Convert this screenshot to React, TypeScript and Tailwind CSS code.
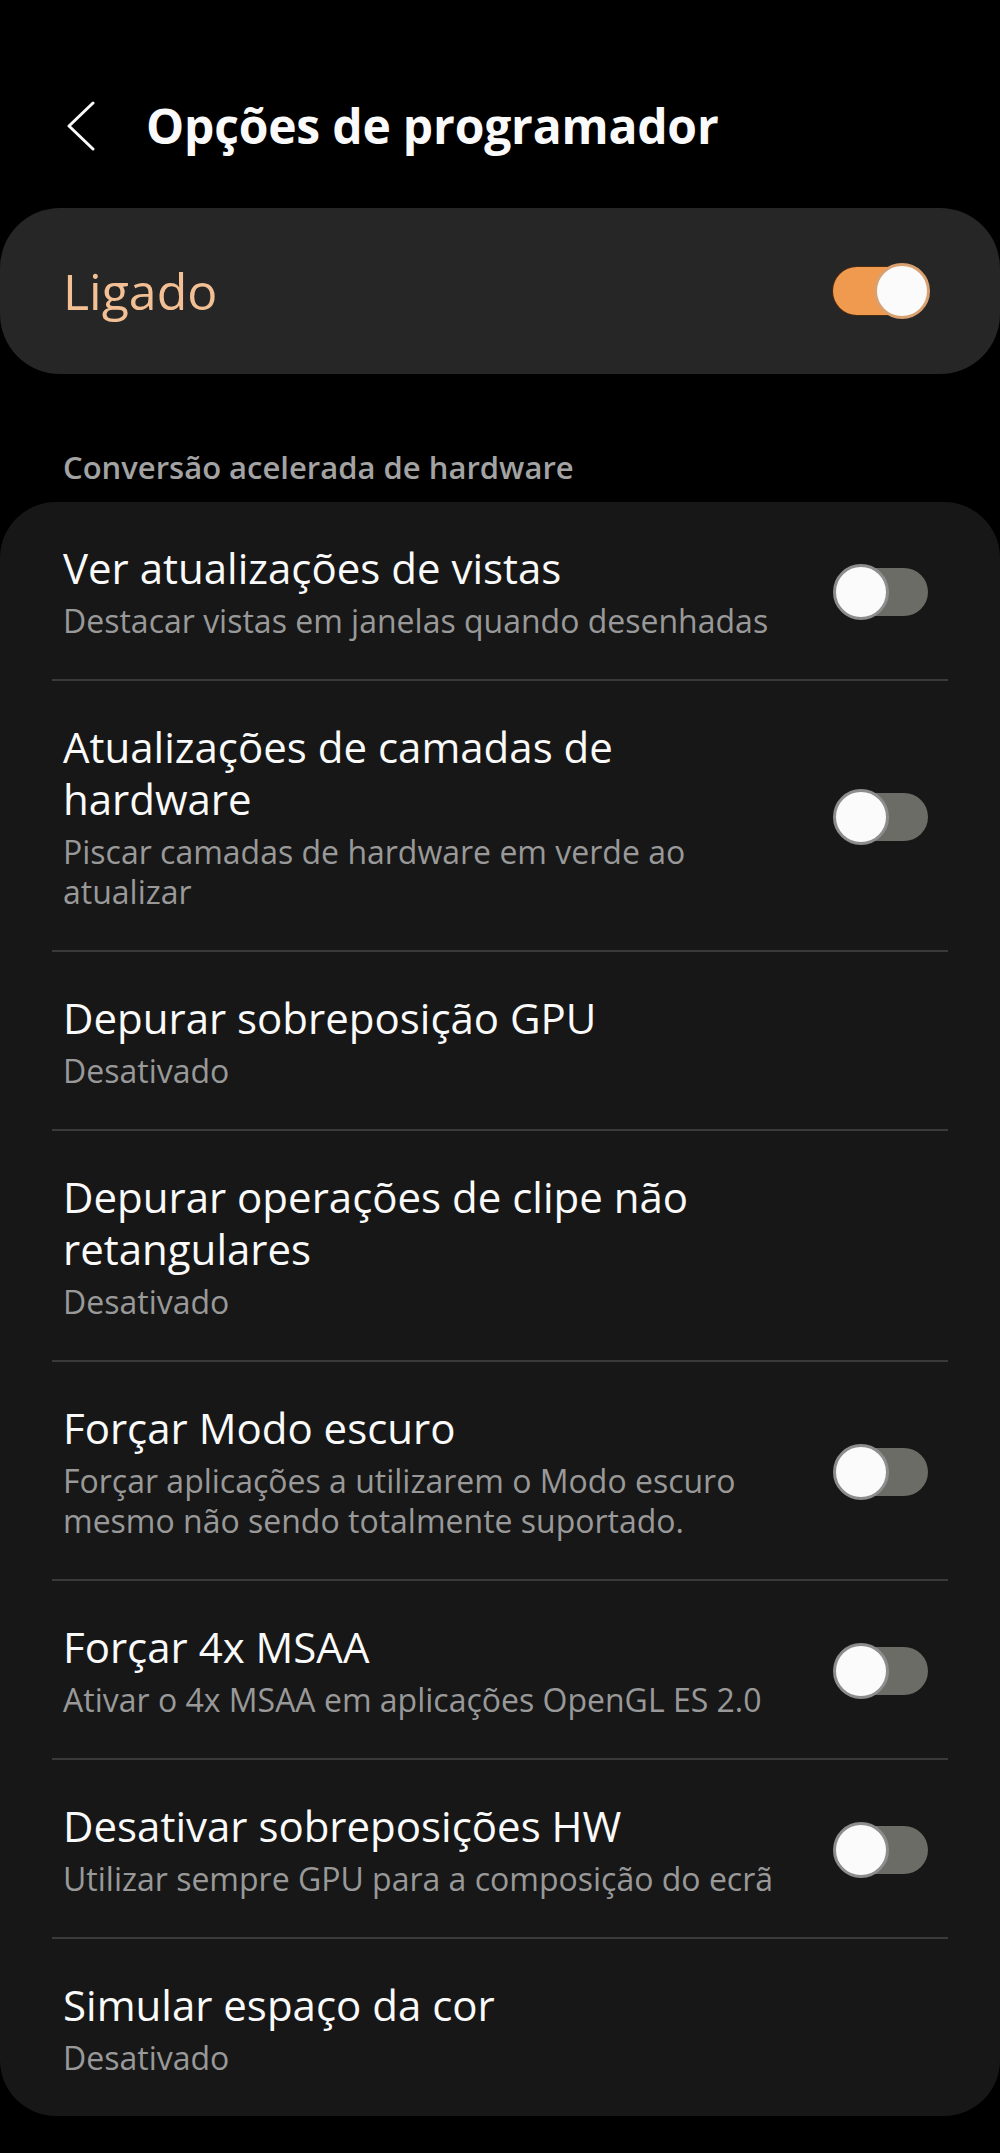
import { useState } from 'react';

type Item = {
  title: string;
  summary: string;
  toggle?: boolean;
};

const items: Item[] = [
  { title: 'Ver atualizações de vistas', summary: 'Destacar vistas em janelas quando desenhadas', toggle: true },
  { title: 'Atualizações de camadas de hardware', summary: 'Piscar camadas de hardware em verde ao atualizar', toggle: true },
  { title: 'Depurar sobreposição GPU', summary: 'Desativado' },
  { title: 'Depurar operações de clipe não retangulares', summary: 'Desativado' },
  { title: 'Forçar Modo escuro', summary: 'Forçar aplicações a utilizarem o Modo escuro mesmo não sendo totalmente suportado.', toggle: true },
  { title: 'Forçar 4x MSAA', summary: 'Ativar o 4x MSAA em aplicações OpenGL ES 2.0', toggle: true },
  { title: 'Desativar sobreposições HW', summary: 'Utilizar sempre GPU para a composição do ecrã', toggle: true },
  { title: 'Simular espaço da cor', summary: 'Desativado' },
];

function Switch({ on, onClick }: { on: boolean; onClick: () => void }) {
  return (
    <button type="button" onClick={onClick} className="relative w-[97px] h-[56px] shrink-0">
      <span
        className={
          on
            ? 'absolute left-0 right-[6px] top-[4px] bottom-[4px] rounded-full bg-[#ef9a4e] ring-1 ring-[#4a2c12]'
            : 'absolute left-[6px] right-[2px] top-[4px] bottom-[4px] rounded-full bg-[#6b6c66]'
        }
      />
      <span
        className={
          on
            ? 'absolute right-0 top-0 w-[56px] h-[56px] rounded-full bg-[#fbfbfb] border-[3px] border-[#d9a070]'
            : 'absolute left-0 top-0 w-[56px] h-[56px] rounded-full bg-[#fbfbfb] border-[3px] border-[#8d8d8d]'
        }
      />
    </button>
  );
}

export default function App() {
  const [enabled, setEnabled] = useState(true);
  const [flags, setFlags] = useState<boolean[]>(items.map(() => false));

  const flip = (i: number) => {
    setFlags((prev) => prev.map((v, j) => (j === i ? !v : v)));
  };

  return (
    <div
      className="min-h-[2153px] bg-black text-[#fafafa] pt-[76px]"
      style={{ fontFamily: '"Open Sans", "Noto Sans", sans-serif' }}
    >
      <div className="flex items-center h-[100px] pl-[66px]">
        <svg width="30" height="50" viewBox="0 0 30 50" fill="none" stroke="#fafafa" strokeWidth="3" strokeLinecap="round" strokeLinejoin="round">
          <path d="M27 2 L3 25 L27 48" />
        </svg>
        <h1 className="ml-[50px] text-[48px] font-bold leading-none tracking-[-0.2px]">Opções de programador</h1>
      </div>

      <div className="mt-[32px] h-[166px] rounded-[60px] bg-[#262626] flex items-center pl-[63px] pr-[70px]">
        <span className="flex-1 text-[50px] leading-none text-[#f2c094]">{enabled ? 'Ligado' : 'Desligado'}</span>
        <Switch on={enabled} onClick={() => setEnabled(!enabled)} />
      </div>

      <div className="mt-[73px] mb-[15px] pl-[63px] text-[31px] leading-[40px] font-semibold text-[#a3a3a3]">
        Conversão acelerada de hardware
      </div>

      <div className="rounded-[56px] bg-[#171717]">
        {items.map((item, i) => (
          <div key={item.title}>
            {i > 0 && <div className="mx-[52px] h-[2px] bg-[#3a3a3a]" />}
            <div className="flex items-center pl-[63px] pr-[70px] pt-[40px] pb-[38px]">
              <div className="flex-1">
                <div className="max-w-[721px]">
                  <div className="text-[42px] leading-[52px]">{item.title}</div>
                  <div className="mt-[7px] text-[32px] leading-[40px] text-[#999999]">{item.summary}</div>
                </div>
              </div>
              {item.toggle && <Switch on={flags[i]} onClick={() => flip(i)} />}
            </div>
          </div>
        ))}
      </div>
    </div>
  );
}
